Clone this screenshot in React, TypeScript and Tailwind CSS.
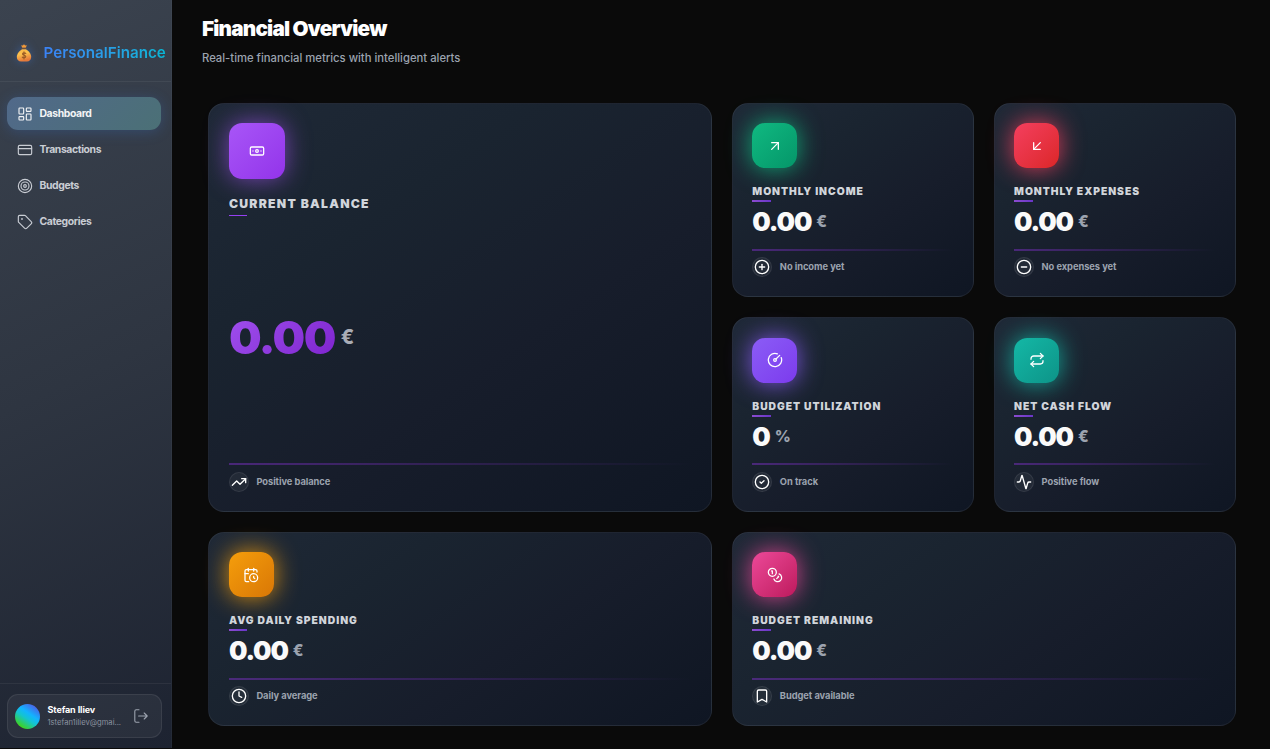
import React from "react";
import {
  Activity, ArrowDownLeft, ArrowUpRight, Banknote, Bookmark, CalendarClock, CircleCheck, CircleGauge,
  CircleMinus, CirclePlus, Clock, Coins, CreditCard, LayoutDashboard, Repeat, Tag, Target, TrendingUp,
  type LucideIcon,
} from "lucide-react";

type Metric = {
  title: string;
  value: string;
  unit: string;
  note: string;
  icon: LucideIcon;
  noteIcon: LucideIcon;
  tile: string;
  span: string;
  large?: boolean;
};

const metrics: Metric[] = [
  { title: "Current Balance", value: "0.00", unit: "€", note: "Positive balance", icon: Banknote, noteIcon: TrendingUp, tile: "from-[#a855f7] to-[#9333ea] shadow-[0_0_24px_rgba(168,85,247,0.65)]", span: "col-span-2 row-span-2", large: true },
  { title: "Monthly Income", value: "0.00", unit: "€", note: "No income yet", icon: ArrowUpRight, noteIcon: CirclePlus, tile: "from-[#10b981] to-[#059669] shadow-[0_0_24px_rgba(16,185,129,0.9)]", span: "" },
  { title: "Monthly Expenses", value: "0.00", unit: "€", note: "No expenses yet", icon: ArrowDownLeft, noteIcon: CircleMinus, tile: "from-[#f43f5e] to-[#dc2626] shadow-[0_0_24px_rgba(244,63,94,0.9)]", span: "" },
  { title: "Budget Utilization", value: "0", unit: "%", note: "On track", icon: CircleGauge, noteIcon: CircleCheck, tile: "from-[#8b5cf6] to-[#7c3aed] shadow-[0_0_24px_rgba(139,92,246,0.9)]", span: "" },
  { title: "Net Cash Flow", value: "0.00", unit: "€", note: "Positive flow", icon: Repeat, noteIcon: Activity, tile: "from-[#14b8a6] to-[#0d9488] shadow-[0_0_24px_rgba(20,184,166,0.9)]", span: "" },
  { title: "Avg Daily Spending", value: "0.00", unit: "€", note: "Daily average", icon: CalendarClock, noteIcon: Clock, tile: "from-[#f59e0b] to-[#d97706] shadow-[0_0_24px_rgba(245,158,11,0.9)]", span: "col-span-2" },
  { title: "Budget Remaining", value: "0.00", unit: "€", note: "Budget available", icon: Coins, noteIcon: Bookmark, tile: "from-[#ec4899] to-[#be185d] shadow-[0_0_24px_rgba(236,72,153,0.9)]", span: "col-span-2" },
];

const nav: { label: string; icon: LucideIcon; active?: boolean }[] = [
  { label: "Dashboard", icon: LayoutDashboard, active: true },
  { label: "Transactions", icon: CreditCard },
  { label: "Budgets", icon: Target },
  { label: "Categories", icon: Tag },
];

function MoneyBag() {
  return (
    <svg width="16" height="18" viewBox="0 0 16 18" className="shrink-0 drop-shadow-[0_0_5px_rgba(59,130,246,0.4)]">
      <defs>
        <linearGradient id="bag" x1="0" y1="0" x2="0.3" y2="1">
          <stop offset="0" stopColor="#f9b044" />
          <stop offset="0.45" stopColor="#fdc14d" />
          <stop offset="1" stopColor="#e5793a" />
        </linearGradient>
      </defs>
      <path d="M5.200 1.200 6.800 1.600 8 .2l1.200 1.400 1.600-.4-1 2.600H6.200z" fill="#f39a38" />
      <path d="M6 5.200h4c2.600 1.600 5.200 4.600 5.200 7.800 0 3-2 4.400-4.200 4.400H5C2.800 17.400.8 16 .8 13 .8 9.800 3.400 6.800 6 5.200z" fill="url(#bag)" />
      <path d="M5.800 4.400h4.400" stroke="#6b5040" strokeWidth="1" strokeLinecap="round" />
      <path d="M9.800 9.500C9.400 8.700 6.500 8.500 6.500 10c0 1.500 3.300 1 3.300 2.600 0 1.500-2.900 1.400-3.500.5M8 7.800v7.200" fill="none" stroke="#9a5a25" strokeWidth="1.100" strokeLinecap="round" />
    </svg>
  );
}

function ExitIcon() {
  return (
    <svg width="14" height="14" viewBox="0 0 14 14" fill="none" stroke="currentColor" strokeWidth="1.100" strokeLinecap="round" strokeLinejoin="round" className="shrink-0 text-[#9ca3af]">
      <path d="M5 .8H2.200A1.400 1.400 0 0 0 .8 2.200v9.600a1.400 1.400 0 0 0 1.400 1.400H5M4.600 7h8.600M10.200 4l3 3-3 3" />
    </svg>
  );
}

function Sidebar() {
  return (
    <aside className="flex h-[748px] w-[172px] shrink-0 flex-col border-r border-white/2 bg-[linear-gradient(155deg,#3b434f_0%,#2e3541_50%,#1d2331_100%)]">
      <div className="flex h-[82px] items-end gap-[11.500px] border-b border-white/6 pb-[19px] pl-4">
        <MoneyBag />
        <span className="mb-[-1px] bg-linear-to-r from-[#3b82f6] to-[#06b6d4] bg-clip-text text-[15.200px] leading-[20px] font-semibold text-transparent">PersonalFinance</span>
      </div>
      <nav className="flex flex-1 flex-col gap-[3px] px-[7px] pt-[15px]">
        {nav.map(({ label, icon: Icon, active }) => (
          <a
            key={label}
            className={
              active
                ? "flex h-[33px] w-[154px] items-center gap-[6.500px] rounded-[11px] bg-[linear-gradient(135deg,#51698a,#4b7076)] pl-[10px] text-[10.400px] font-bold tracking-[-0.380px] text-[#f3f4f6] shadow-[0_2px_14px_rgba(59,130,246,0.22)]"
                : "flex h-[33px] w-[154px] items-center gap-[6.500px] rounded-[11px] pl-[10px] text-[10.400px] font-bold tracking-[-0.380px] text-[#c9cdd4]"
            }
          >
            <Icon size={16} strokeWidth={1.7} />
            {label}
          </a>
        ))}
      </nav>
      <div className="border-t border-white/6 px-[7px] pt-[10px] pb-[10px]">
        <div className="flex h-11 w-[155px] items-center rounded-[11px] border border-white/8 bg-white/5 pr-[13px] pl-[7px]">
          <div className="size-[25px] shrink-0 rounded-full bg-[linear-gradient(215deg,#5b4be0_5%,#12b4ff_40%,#14c4cf_56%,#3ed321_85%)]" />
          <div className="ml-[7.500px] min-w-0 flex-1">
            <div className="text-[9px] leading-[14px] font-bold tracking-[-0.1px] text-white">Stefan Iliev</div>
            <div className="text-[7.600px] leading-[12px] text-[#8b93a0]">1stefan1iliev@gmai...</div>
          </div>
          <ExitIcon />
        </div>
      </div>
    </aside>
  );
}

function MetricCard({ m }: { m: Metric }) {
  const Icon = m.icon;
  const NoteIcon = m.noteIcon;
  return (
    <section className={`flex flex-col rounded-[16px] border border-white/6 bg-[linear-gradient(145deg,#1f2937_0%,#1a2430_30%,#171d2b_60%,#0f1623_100%)] px-[19.500px] pt-[19.500px] pb-[19px] ${m.span}`}>
      <div className={`flex shrink-0 items-center justify-center bg-linear-135 text-white ${m.large ? "size-14 rounded-[13px]" : "size-[45px] rounded-[13px]"} ${m.tile}`}>
        <Icon size={16} strokeWidth={1.9} />
      </div>
      <h3 className={`font-black text-[#d1d5db] uppercase ${m.large ? "mt-[16.500px] text-[12.200px] leading-4 tracking-[1.250px]" : "mt-[15px] text-[10.300px] leading-4 tracking-[0.970px]"}`}>{m.title}</h3>
      <div className={`w-[18.500px] shrink-0 ${m.large ? "mt-[3px] h-px bg-[#9540f2]" : "mt-px h-0.5 bg-linear-to-r from-[#a855f7] to-[#7c3aed] opacity-80"}`} />
      {m.large ? (
        <div className="flex flex-1 items-center gap-[6px] pb-[4px]">
          <span className="bg-linear-135 from-[#a04fee] to-[#7e22ce] bg-clip-text text-[46px] leading-[48px] font-black tracking-[-1.600px] text-transparent">{m.value}</span>
          <span className="text-[19.500px] leading-6 font-extrabold text-[#a9adb6]">{m.unit}</span>
        </div>
      ) : (
        <div className="mt-1 flex items-center gap-[5px]">
          <span className="text-[26px] leading-8 font-black tracking-[-1.150px] text-[#fafafa]">{m.value}</span>
          <span className="text-[15.600px] leading-6 font-extrabold text-[#9ca3af]">{m.unit}</span>
        </div>
      )}
      <div className={`h-0.5 shrink-0 bg-linear-to-r from-[#9333ea]/40 to-transparent ${m.large ? "" : "mt-auto"}`} />
      <div className="mt-[6.500px] flex items-center gap-[7.500px]">
        <span className="flex size-5 items-center justify-center rounded-full border border-white/8 bg-white/5 text-white">
          <NoteIcon size={16} strokeWidth={2} className="shrink-0" />
        </span>
        <span className="text-[9.300px] leading-4 font-bold tracking-[-0.040px] text-[#9ca3af]">{m.note}</span>
      </div>
    </section>
  );
}

export default function App() {
  return (
    <div className="flex h-[749px] w-[1270px] overflow-hidden bg-[#0a0a0a] font-['Inter',sans-serif]">
      <Sidebar />
      <main className="flex-1 pt-[15px] pr-[34.500px] pl-[30px]">
        <h1 className="text-[20.700px] leading-7 font-black tracking-[-0.800px] text-white">Financial Overview</h1>
        <p className="mt-[6px] text-[11.270px] leading-[18px] font-medium text-[#9ca3af]">Real-time financial metrics with intelligent alerts</p>
        <div className="mt-[35.500px] ml-[6.400px] grid h-[624px] grid-cols-4 grid-rows-3 gap-[19.800px]">
          {metrics.map((m) => (
            <MetricCard key={m.title} m={m} />
          ))}
        </div>
      </main>
    </div>
  );
}
